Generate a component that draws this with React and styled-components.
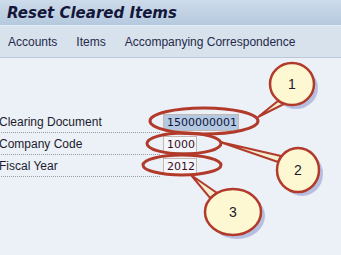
import React from "react";
import styled, { createGlobalStyle } from "styled-components";

const Global = createGlobalStyle`
  html, body { margin: 0; padding: 0; }
  body { width: 341px; height: 255px; overflow: hidden; background: #ecf0f7; }
`;

const Page = styled.div`
  position: relative;
  width: 341px;
  height: 255px;
  background: #ecf0f7;
  overflow: hidden;
  font-family: "DejaVu Sans", Verdana, sans-serif;
`;

const TitleBar = styled.div`
  height: 26px;
  box-sizing: border-box;
  padding-left: 7px;
  display: flex;
  align-items: center;
  background: linear-gradient(#cddbea, #b5c9de);
  border-bottom: 1px solid #e6edf5;
`;

const Title = styled.h1`
  margin: 0;
  font-size: 15px;
  font-weight: bold;
  font-style: italic;
  color: #14163a;
`;

const Toolbar = styled.div`
  height: 32px;
  box-sizing: border-box;
  display: flex;
  align-items: center;
  gap: 19px;
  padding-left: 8px;
  padding-top: 1px;
  background: #d8e2ed;
  border-bottom: 1px solid #b9c8d8;
`;

const MenuItem = styled.span`
  font-family: "Liberation Sans", Arial, sans-serif;
  font-size: 12px;
  color: #26294a;
`;

const Form = styled.div`
  display: flex;
  flex-direction: column;
  padding-top: 53px;
  margin-left: -1px;
`;

const Row = styled.div`
  display: flex;
  align-items: center;
  height: 22px;
`;

const Label = styled.div`
  width: 161px;
  height: 22px;
  box-sizing: border-box;
  display: flex;
  align-items: center;
  font-family: "Liberation Sans", Arial, sans-serif;
  font-size: 12px;
  color: #1c1c2c;
  border-bottom: 1px dotted #9a9aa0;
`;

const Field = styled.div`
  margin-left: 3px;
  width: ${(p) => p.$w}px;
  height: 17px;
  box-sizing: border-box;
  display: flex;
  align-items: center;
  padding-left: 3px;
  background: ${(p) => (p.$active ? "#b4c8e1" : "#f4f6fb")};
  border: 1px solid #c3b9b0;
  font-family: "DejaVu Sans", sans-serif;
  font-size: 11px;
  color: ${(p) => (p.$active ? "#10163a" : "#3a1020")};
`;

const Overlay = styled.svg`
  position: absolute;
  left: 0;
  top: 0;
  width: 341px;
  height: 255px;
  pointer-events: none;
`;

const RED = "#b23a2b";

function Callout({ cx, cy, rx, ry, n, tail }) {
  return (
    <g>
      <polygon points={tail.map((p) => p.join(",")).join(" ")} fill="#f2eed0" stroke={RED} strokeWidth="2" />
      <ellipse cx={cx + 4} cy={cy + 4} rx={rx} ry={ry} fill="#8a98cc" opacity="0.55" />
      <ellipse cx={cx} cy={cy} rx={rx} ry={ry} fill="#fef8d2" stroke={RED} strokeWidth="2.5" />
      <text x={cx} y={cy + 5} textAnchor="middle" fontFamily="Liberation Sans, Arial, sans-serif" fontSize="14" fill="#1a1a30">
        {n}
      </text>
    </g>
  );
}

export default function App() {
  return (
    <Page>
      <Global />
      <TitleBar>
        <Title>Reset Cleared Items</Title>
      </TitleBar>
      <Toolbar>
        <MenuItem>Accounts</MenuItem>
        <MenuItem>Items</MenuItem>
        <MenuItem>Accompanying Correspondence</MenuItem>
      </Toolbar>
      <Form>
        <Row>
          <Label>Clearing Document</Label>
          <Field $w={76} $active>1500000001</Field>
        </Row>
        <Row>
          <Label>Company Code</Label>
          <Field $w={34}>1000</Field>
        </Row>
        <Row>
          <Label>Fiscal Year</Label>
          <Field $w={34}>2012</Field>
        </Row>
      </Form>
      <Overlay viewBox="0 0 341 255">
        <ellipse cx="204" cy="121" rx="54" ry="13" fill="none" stroke={RED} strokeWidth="3" />
        <ellipse cx="184" cy="143.5" rx="37" ry="10.5" fill="none" stroke={RED} strokeWidth="3" />
        <ellipse cx="182" cy="165" rx="39" ry="10" fill="none" stroke={RED} strokeWidth="3" />
        <Callout cx={292} cy={84} rx={22} ry={21} n="1" tail={[[258, 117], [278, 101], [284, 104]]} />
        <Callout cx={298} cy={170} rx={21} ry={22} n="2" tail={[[220, 142], [281, 156], [278, 162]]} />
        <Callout cx={233} cy={212} rx={28} ry={23} n="3" tail={[[191, 175], [210, 198], [217, 193]]} />
      </Overlay>
    </Page>
  );
}
